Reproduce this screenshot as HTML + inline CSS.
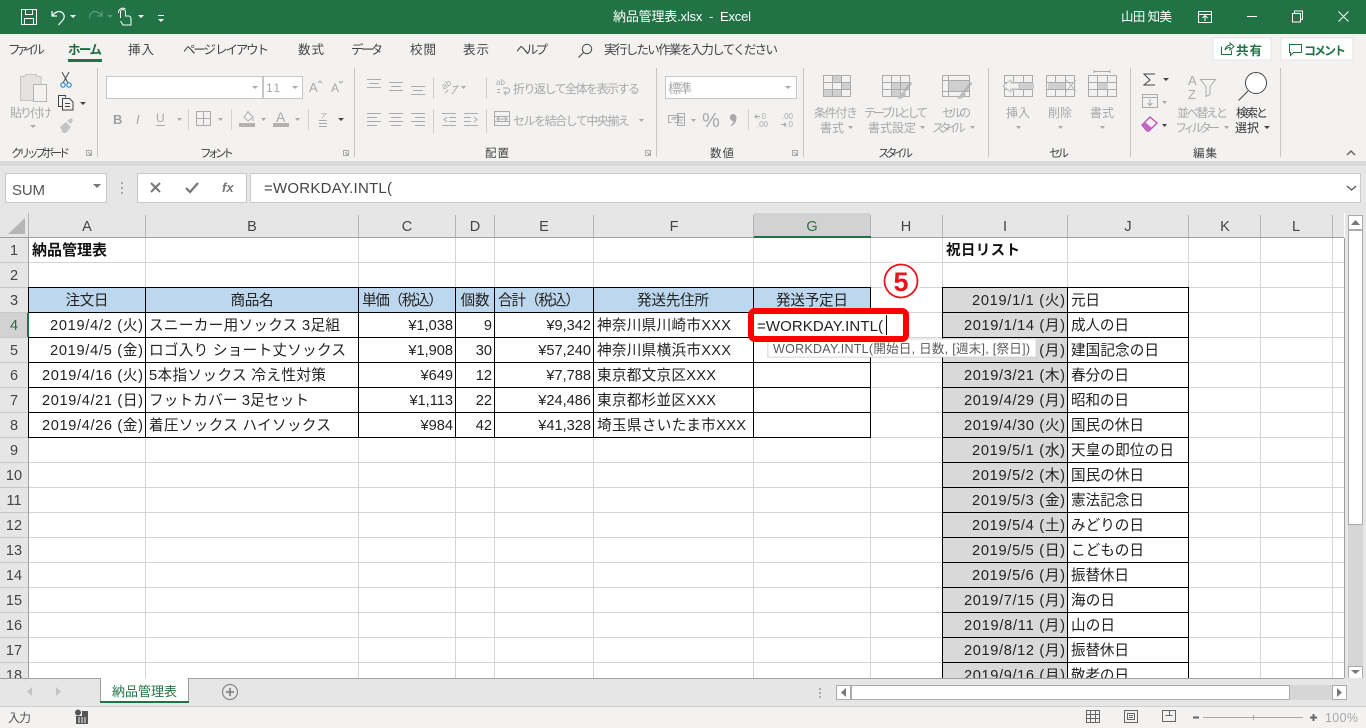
<!DOCTYPE html>
<html lang="ja"><head><meta charset="utf-8"><title>納品管理表.xlsx - Excel</title>
<style>
html,body{margin:0;padding:0;background:#fff;overflow:hidden}
svg{display:block}
text{font-family:"Liberation Sans","Noto Sans CJK JP",sans-serif;white-space:pre}
.c{font-size:14.6px;fill:#222}
.m{text-anchor:middle}
.e{text-anchor:end}
.h{font-size:14.5px;fill:#444;text-anchor:middle}
.t{font-size:12px;fill:#333}
.d{font-size:12px;fill:#a8a8a8}
.g{font-size:11.5px;fill:#444}
.ic{fill:none;stroke:#ababab;stroke-width:1}
.dk{fill:none;stroke:#444;stroke-width:1}
.ar{fill:#aaa}
.ak{fill:#444}
</style></head><body>
<svg width="1366" height="728" viewBox="0 0 1366 728" xmlns="http://www.w3.org/2000/svg">
<rect width="1366" height="728" fill="#fff"/>
<!-- title bar -->
<rect width="1366" height="34" fill="#217346"/>
<g fill="none" stroke="#fff" stroke-width="1">
<path d="M21.500 9.500h15v15h-15zM25.500 9.500v5h7v-5M24.500 24.500v-6h9v6"/>
<path d="M52 11v5h5M52.500 15.500c3-4 7-5 9.500-3 3 2 3 6-.5 9l-3 3.500" stroke-width="1.200"/>
<path d="M102 11v5h-5M101.500 15.500c-3-4-7-5-9.500-3-2 1.500-3 4-2 6" stroke="#5d9a7a" stroke-width="1.200"/>
<path d="M120.500 18v-6a2.500 2.500 0 0 1 5 0v4h3a2.500 2.500 0 0 1 2.500 2.500v6.500h-8l-2.500-4M118.500 13a4.500 4.500 0 0 1 7-4"/>
<path d="M1247 16.500h10M1294.500 13.500v-2.500h8v8.500h-2M1292.500 13.500h8v8.500h-8zM1338.500 11.500l10 10M1348.500 11.500l-10 10"/>
<path d="M1198.500 11.500h13v11h-13zM1198.500 14.500h13M1205 21v-5M1202.500 18l2.500-2.500 2.500 2.500"/>
<path d="M158 15.500h6"/>
</g>
<path d="M70 15h6l-3 3zM138 15h6l-3 3zM158 19h6l-3 3z" fill="#fff"/>
<path d="M107 15h6l-3 3z" fill="#5d9a7a"/>
<text x="613" y="21" font-size="13" fill="#fff" textLength="138">納品管理表.xlsx  -  Excel</text>
<text x="1121" y="21" font-size="12.500" fill="#fff" textLength="51">山田 知美</text>
<!-- ribbon -->
<rect y="34" width="1366" height="127" fill="#f3f2f1"/>
<rect y="161" width="1366" height="5" fill="#d9d9d9"/>
<rect y="166" width="1366" height="47" fill="#e6e6e6"/>
<g font-size="12.500" fill="#444">
<text x="8" y="54" textLength="37">ファイル</text>
<text x="68" y="54" textLength="34" font-weight="bold" fill="#1f6b41">ホーム</text>
<text x="128" y="54" textLength="26">挿入</text>
<text x="183" y="54" textLength="86">ページ レイアウト</text>
<text x="298" y="54" textLength="26">数式</text>
<text x="351" y="54" textLength="32">データ</text>
<text x="410" y="54" textLength="26">校閲</text>
<text x="463" y="54" textLength="26">表示</text>
<text x="516" y="54" textLength="32">ヘルプ</text>
<text x="604" y="54" textLength="174">実行したい作業を入力してください</text>
</g>
<rect x="68" y="59" width="34" height="3" fill="#217346"/>
<circle cx="587" cy="49" r="4.700" class="dk"/>
<path class="dk" d="M583.500 52.500l-5 5"/>
<rect x="1213" y="38" width="58" height="22" fill="#fff" stroke="#e4e4e4"/>
<rect x="1281" y="38" width="72" height="22" fill="#fff" stroke="#e4e4e4"/>
<path d="M1221.500 46.500v8h10v-4M1225 50c.5-3 2.500-4.500 5-4.500V43l4 3.500-4 3.500v-2.500c-2 0-3.500 .5-5 2.500z" fill="none" stroke="#217346"/>
<path d="M1289.500 44.500h12v8h-8l-3 3v-3h-1z" fill="none" stroke="#217346"/>
<text x="1236" y="55" font-size="12.500" font-weight="bold" fill="#217346" textLength="26">共有</text>
<text x="1304" y="55" font-size="12" font-weight="bold" fill="#217346" textLength="42">コメント</text>
<!-- separators -->
<path d="M97.500 68v89M354.500 68v89M656.500 68v89M803.500 68v89M988.500 68v89M1130.500 68v89M1280.500 68v89" stroke="#c6c6c6"/>
<path d="M433.500 77v22M433.500 109v24M486.500 77v22M486.500 109v24M188.500 109v21M231.500 109v21M308.500 109v21M748.500 109v21" stroke="#d0d0d0"/>
<!-- group labels -->
<text class="g" x="11" y="157" textLength="59">クリップボード</text>
<text class="g" x="200" y="157" textLength="34">フォント</text>
<text class="g" x="485" y="157" textLength="24">配置</text>
<text class="g" x="710" y="157" textLength="24">数値</text>
<text class="g" x="878" y="157" textLength="35">スタイル</text>
<text class="g" x="1049" y="157" textLength="20">セル</text>
<text class="g" x="1193" y="157" textLength="24">編集</text>
<path class="ic" d="M86.500 150.500h5v5h-5zM88 152l3 3M91 153v2h-2"/>
<path class="ic" d="M343.500 150.500h5v5h-5zM345 152l3 3M348 153v2h-2"/>
<path class="ic" d="M645.500 150.500h5v5h-5zM647 152l3 3M650 153v2h-2"/>
<path class="ic" d="M792.500 150.500h5v5h-5zM794 152l3 3M797 153v2h-2"/>
<path d="M1347 155l4-4 4 4" fill="none" stroke="#666" stroke-width="1.500"/>
<!-- clipboard group -->
<path d="M20.500 76.500h5v-2h11v2h4.500v24h-20.500z" fill="#e4e3e2" stroke="#c4c4c4"/>
<rect x="33.500" y="84.500" width="13" height="17" fill="#f3f2f1" stroke="#b5b5b5"/>
<text class="d" x="10" y="117" textLength="42">貼り付け</text>
<path class="ar" d="M30 125h6l-3 3z"/>
<path d="M62 72l6 11M69 72l-6 11" stroke="#444" fill="none"/>
<circle cx="63" cy="85" r="2.200" fill="none" stroke="#2b8fd6" stroke-width="1.200"/><circle cx="69" cy="85" r="2.200" fill="none" stroke="#2b8fd6" stroke-width="1.200"/>
<path class="dk" d="M62.500 106.500h-4v-11h7v2M62.500 98.500h7l3.500 3.500v8h-10.500z"/><path class="dk" d="M65 103.500h5M65 106.500h5"/>
<path class="ak" d="M80 102h6l-3 3z"/>
<path d="M60 127l6-5 5 5-5 6h-3zM67 121l4-3 2 2-2 4z" fill="#c4c4c4"/>
<!-- font group -->
<rect x="106.500" y="76.500" width="156" height="22" fill="#fff" stroke="#c6c6c6"/>
<rect x="263.500" y="76.500" width="39" height="22" fill="#fff" stroke="#c6c6c6"/>
<path class="ar" d="M252 86h6l-3 3zM292 86h6l-3 3zM177 118h5l-2.500 3zM218 118h5l-2.500 3zM261 118h5l-2.500 3zM295 118h5l-2.500 3z"/>
<path class="ak" d="M338 118h6l-3 3z"/>
<text x="266" y="92" font-size="12" fill="#a8a8a8" textLength="14">11</text>
<text x="309" y="92" font-size="13" fill="#a8a8a8">A</text><text x="331" y="92" font-size="12" fill="#a8a8a8">A</text>
<path class="ic" d="M318 83l2-2 2 2M339 81l2 2 2-2"/>
<text x="113" y="124" font-size="13" font-weight="bold" fill="#a0a0a0">B</text>
<text x="136" y="124" font-size="13" font-style="italic" fill="#a8a8a8" font-family="Liberation Serif">I</text>
<text x="156" y="122" font-size="12" fill="#a8a8a8">U</text>
<path class="ic" d="M156 125.500h9M196.500 111.500h14v14h-14zM203.500 111.500v14M196.500 118.500h14"/>
<path class="ic" d="M244 117l4-5 5 5-5 4zM248 112v-1M253 118v3"/>
<rect x="239" y="123" width="16" height="4" fill="#b5b1ac"/>
<text x="276" y="122" font-size="14" fill="#a8a8a8">A</text>
<rect x="273" y="123" width="16" height="4" fill="#b5b1ac"/>
<text x="320" y="118" font-size="7" fill="#a8a8a8">ア</text>
<path class="ic" d="M319 120.500h8M319 123.500h8M319 126.500h8"/>
<!-- align -->
<path class="ic" d="M367 79.500h14M369 83.500h10M367 87.500h14M389 82.500h14M391 86.500h10M389 90.500h14M411 86.500h14M413 90.500h10M411 94.500h14"/>
<path class="ic" d="M367 113.500h14M367 117.500h10M367 121.500h14M367 125.500h10M389 113.500h14M391 117.500h10M389 121.500h14M391 125.500h10M411 113.500h14M415 117.500h10M411 121.500h14M415 125.500h10"/>
<path class="ic" d="M445 93l3-3M452 94l6-8-5 1"/>
<text x="442" y="88" font-size="9" fill="#aaa" transform="rotate(-35 446 86)">ab</text>
<path class="ar" d="M461 86h5l-2.500 3z"/>
<path class="ic" d="M442 113.500h14M449 117.500h7M449 121.500h7M442 125.500h14M447 117l-3 2.500 3 2.500M464 113.500h14M464 117.500h7M464 121.500h7M464 125.500h14M474 117l3 2.500-3 2.500"/>
<text x="496" y="85" font-size="8" fill="#aaa">ab</text>
<path class="ic" d="M497 89.500h3M497 92.500h3M503 88h5c2 0 2 5 0 5h-3M506 91l-2 2 2 2"/>
<text class="d" x="513" y="93" textLength="127">折り返して全体を表示する</text>
<path class="ic" d="M494.500 111.500h15v14h-15zM494.500 116.500h15M494.500 121.500h15M497 119h10M499 117l-2 2 2 2M505 117l2 2-2 2"/>
<text class="d" x="513" y="125" textLength="117">セルを結合して中央揃え</text>
<path class="ar" d="M639 119h5l-2.500 3z"/>
<!-- number -->
<rect x="665.500" y="76.500" width="131" height="22" fill="#fff" stroke="#c6c6c6"/>
<text class="d" x="668" y="93" font-size="13" style="font-size:13px" textLength="24">標準</text>
<path class="ar" d="M785 86h6l-3 3zM691 119h5l-2.500 3z"/>
<path class="ic" d="M668.500 115.500h10v7h-4M668.500 115.500v7h3M672.500 117.500h12v-2M677.500 113.500h7v12h-7zM671 119h5M679 117h4M679 120h4M679 123h4"/>
<text x="702" y="127" font-size="20" fill="#a8a8a8" textLength="16">%</text>
<path d="M733 114a3.500 3.500 0 0 1 3.500 3.500c0 4-1.500 6.500-5 8.500l-.8-1c1.800-1.200 2.800-2.600 3-4a3.400 3.400 0 0 1-.7-7z" fill="#a8a8a8"/>
<text x="758" y="119" font-size="8" fill="#aaa" textLength="8">.0</text><text x="757" y="127" font-size="8" fill="#aaa" textLength="11">.00</text>
<text x="782" y="119" font-size="8" fill="#aaa" textLength="11">.00</text><text x="785" y="127" font-size="8" fill="#aaa" textLength="8">.0</text>
<path class="ic" d="M760 116.500h-5l2-2M755 116.500l2 2M781 124.500h5l-2-2M786 124.500l-2 2"/>
<!-- style -->
<path d="M833 76h8v6h-8zM824 90h18v6h-18z" fill="#cfcfcf"/>
<path d="M841 83h9v6h-9z" fill="#cfcfcf"/>
<path d="M892 83h17v6h-17zM892 90h8v6h-8z" fill="#cfcfcf"/>
<path d="M949 81h20v10h-20z" fill="#cfcfcf"/>
<g class="ic">
<path d="M823.500 75.500h27v21h-27zM823.500 82.500h27M823.500 89.500h27M832.500 75.500v21M841.500 75.500v21"/>
<path d="M882.500 75.500h27v21h-27zM882.500 82.500h27M882.500 89.500h27M891.500 75.500v21M900.500 75.500v21"/>
<path d="M942.500 75.500h27v21h-27zM942.500 80.500h27M942.500 91.500h27M948.500 75.500v21"/>
</g>
<path d="M911 82l-8 10M912 83l-8 10" stroke="#aaa" fill="none"/><path d="M897 99c2-1 3-6 6-7l3 2c-1 3-4 5-9 5z" fill="#bdbdbd"/>
<path d="M971 82l-8 10M972 83l-8 10" stroke="#aaa" fill="none"/><path d="M957 99c2-1 3-6 6-7l3 2c-1 3-4 5-9 5z" fill="#bdbdbd"/>
<text class="d" x="814" y="117" textLength="44">条件付き</text>
<text class="d" x="820" y="132" textLength="24">書式</text>
<text class="d" x="864" y="117" textLength="64">テーブルとして</text>
<text class="d" x="868" y="132" textLength="48">書式設定</text>
<text class="d" x="942" y="117" textLength="29">セルの</text>
<text class="d" x="932" y="132" textLength="34">スタイル</text>
<path class="ar" d="M848 126h5l-2.500 3zM920 126h5l-2.500 3zM970 126h5l-2.500 3z"/>
<!-- cells -->
<g class="ic">
<path d="M1004.500 75.500h28v21h-28zM1004.500 82.500h28M1004.500 89.500h28M1013.500 75.500v21M1023.500 75.500v21"/>
<path d="M1046.500 75.500h28v21h-28zM1046.500 82.500h28M1046.500 89.500h28M1055.500 75.500v21M1065.500 75.500v21"/>
<path d="M1088.500 75.500h28v21h-28zM1088.500 82.500h28M1088.500 89.500h28M1097.500 75.500v21M1107.500 75.500v21M1094 71.500h16M1094 70v3M1110 70v3"/>
</g>
<rect x="1014" y="83" width="20" height="6" fill="#cfcfcf"/>
<path d="M1011 80l-8 6 8 6v-3h8v-6h-8z" fill="#f3f2f1" stroke="#c0c0c0"/>
<rect x="1048" y="83" width="17" height="6" fill="#cfcfcf"/>
<path d="M1066 80l10 11M1076 80l-10 11" stroke="#bbb" fill="none"/>
<rect x="1098" y="83" width="10" height="6" fill="#cfcfcf"/>
<text class="d" x="1006" y="117" textLength="24">挿入</text>
<text class="d" x="1048" y="117" textLength="24">削除</text>
<text class="d" x="1090" y="117" textLength="24">書式</text>
<path class="ar" d="M1016 126h5l-2.500 3zM1058 126h5l-2.500 3zM1100 126h5l-2.500 3z"/>
<!-- edit -->
<path d="M1155 74h-11l6 6-6 5h11" fill="none" stroke="#444"/>
<path class="ak" d="M1163 78h6l-3 3zM1162 124h5l-2.500 3zM1264 126h6l-3 3z"/>
<path class="ar" d="M1162 101h5l-2.500 3zM1224 126h5l-2.500 3z"/>
<path class="ic" d="M1142.500 94.500h15v13h-15zM1142.500 97.500h15M1150 99v6M1147.500 103l2.500 2.500 2.500-2.500"/>
<path d="M1142 125l8-8 7 6-8 8h-2z" fill="#f6f0f6" stroke="#b44cb4" stroke-width="1.300"/>
<path d="M1142 125l3-3 7 6-3 3h-2z" fill="#c266c2"/>
<text x="1188" y="85" font-size="13" fill="#aaa">A</text><text x="1188" y="99" font-size="13" fill="#aaa">Z</text>
<path class="ic" d="M1200.500 79.500h15l-5.500 7v8l-4 2v-10z"/>
<text class="d" x="1177" y="117" textLength="51">並べ替えと</text>
<text class="d" x="1175" y="132" textLength="45">フィルター</text>
<circle cx="1256" cy="83" r="10.500" fill="#fff" stroke="#444"/><path d="M1248 91l-9.500 9.500" stroke="#444" fill="none"/>
<text class="t" x="1236" y="117" textLength="32">検索と</text>
<text class="t" x="1235" y="132" textLength="24">選択</text>
<!-- formula bar -->
<rect x="5.500" y="173.500" width="101" height="29" fill="#fff" stroke="#c9c9c9"/>
<text x="12" y="195" font-size="15" fill="#555" textLength="33">SUM</text>
<path d="M93 184h8l-4 4z" fill="#777"/>
<path d="M122 182v2M122 187v2M122 192v2" stroke="#999" stroke-width="1.500"/>
<rect x="137.500" y="173.500" width="109" height="29" fill="#fff" stroke="#c9c9c9"/>
<rect x="250.500" y="173.500" width="1110" height="29" fill="#fff" stroke="#c9c9c9"/>
<path d="M151 183l9 9M160 183l-9 9" stroke="#777" stroke-width="2" fill="none"/>
<path d="M186 188l4 4 8-9" stroke="#777" stroke-width="2.200" fill="none"/>
<text x="222" y="192" font-size="13" font-style="italic" font-weight="bold" fill="#777" font-family="Liberation Serif">fx</text>
<text x="264" y="193" font-size="15" fill="#444" textLength="128">=WORKDAY.INTL(</text>
<path d="M1347 186l4.500 4 4.500-4" stroke="#555" stroke-width="1.300" fill="none"/>
<!-- column headers -->
<rect x="0" y="213" width="1344" height="25" fill="#e6e6e6"/>
<rect x="754" y="213" width="116" height="24" fill="#d2d2d2"/>
<path d="M8 234h17v-16z" fill="#b5b5b5"/>
<path d="M28.500 213v25M145.500 215v22M358.500 215v22M455.500 215v22M494.500 215v22M593.500 215v22M753.500 215v22M870.500 215v22M942.500 215v22M1067.500 215v22M1188.500 215v22M1260.500 215v22M1332.500 215v22" stroke="#b4b4b4"/>
<path d="M0 237.500h1344" stroke="#9f9f9f"/>
<rect x="754" y="236" width="117" height="2" fill="#217346"/>
<text class="h" x="87" y="231">A</text><text class="h" x="252" y="231">B</text><text class="h" x="407" y="231">C</text><text class="h" x="475" y="231">D</text><text class="h" x="544" y="231">E</text><text class="h" x="674" y="231">F</text><text class="h" x="812" y="231" style="fill:#2c6e49">G</text><text class="h" x="906" y="231">H</text><text class="h" x="1005" y="231">I</text><text class="h" x="1128" y="231">J</text><text class="h" x="1225" y="231">K</text><text class="h" x="1296" y="231">L</text>
<!-- row headers -->
<rect x="0" y="238" width="28" height="440" fill="#e6e6e6"/>
<rect x="0" y="313" width="28" height="24" fill="#d2d2d2"/>
<path d="M0 262.500h28M0 287.500h28M0 312.500h28M0 337.500h28M0 362.500h28M0 387.500h28M0 412.500h28M0 437.500h28M0 462.500h28M0 487.500h28M0 512.500h28M0 537.500h28M0 562.500h28M0 587.500h28M0 612.500h28M0 637.500h28M0 662.500h28" stroke="#c8c8c8"/>
<path d="M28.500 238v440" stroke="#9f9f9f"/>
<rect x="27" y="313" width="2" height="24" fill="#217346"/>
<text class="h" x="14" y="255">1</text><text class="h" x="14" y="280">2</text><text class="h" x="14" y="305">3</text><text class="h" x="14" y="330" style="fill:#2c6e49">4</text><text class="h" x="14" y="355">5</text><text class="h" x="14" y="380">6</text><text class="h" x="14" y="405">7</text><text class="h" x="14" y="430">8</text><text class="h" x="14" y="455">9</text><text class="h" x="14" y="480">10</text><text class="h" x="14" y="505">11</text><text class="h" x="14" y="530">12</text><text class="h" x="14" y="555">13</text><text class="h" x="14" y="580">14</text><text class="h" x="14" y="605">15</text><text class="h" x="14" y="630">16</text><text class="h" x="14" y="655">17</text><text class="h" x="14" y="680">18</text>
<!-- gridlines -->
<path d="M29 262.500h1315M29 287.500h1315M29 312.500h1315M29 337.500h1315M29 362.500h1315M29 387.500h1315M29 412.500h1315M29 437.500h1315M29 462.500h1315M29 487.500h1315M29 512.500h1315M29 537.500h1315M29 562.500h1315M29 587.500h1315M29 612.500h1315M29 637.500h1315M29 662.500h1315" stroke="#d4d4d4"/>
<path d="M145.500 238v440M358.500 238v440M455.500 238v440M494.500 238v440M593.500 238v440M753.500 238v440M870.500 238v440M942.500 238v440M1067.500 238v440M1188.500 238v440M1260.500 238v440M1332.500 238v440" stroke="#d4d4d4"/>
<path d="M1344.500 238v440" stroke="#9f9f9f"/>
<!-- table 1 -->
<rect x="29" y="288" width="841" height="24" fill="#bdd7ee"/>
<path d="M29 287.500h841.500M29 312.500h841.500M29 337.500h841.500M29 362.500h841.500M29 387.500h841.500M29 412.500h841.500M29 437.500h841.500M145.500 287v151M358.500 287v151M455.500 287v151M494.500 287v151M593.500 287v151M753.500 287v151M870.500 287v151M28.500 337v101M28.500 287v26" stroke="#000"/>
<!-- table 2 -->
<rect x="943" y="288" width="124" height="390" fill="#d9d9d9"/>
<path d="M942.500 287v391M1067.500 287v391M1188.500 287v391M942 287.500h247M942 312.500h247M942 337.500h247M942 362.500h247M942 387.500h247M942 412.500h247M942 437.500h247M942 462.500h247M942 487.500h247M942 512.500h247M942 537.500h247M942 562.500h247M942 587.500h247M942 612.500h247M942 637.500h247M942 662.500h247" stroke="#000"/>
<!-- cell text -->
<text x="32" y="255" font-size="15" font-weight="bold" fill="#111" textLength="75">納品管理表</text>
<text x="946" y="255" font-size="14.500" font-weight="bold" fill="#111" textLength="74">祝日リスト</text>
<text class="c m" x="87" y="305" textLength="43">注文日</text>
<text class="c m" x="252" y="305" textLength="43">商品名</text>
<text class="c" x="362" y="305" textLength="81">単価（税込）</text>
<text class="c m" x="475" y="305" textLength="29">個数</text>
<text class="c" x="498" y="305" textLength="82">合計（税込）</text>
<text class="c m" x="673" y="305" textLength="72">発送先住所</text>
<text class="c m" x="812" y="305" textLength="72">発送予定日</text>

<text class="c" x="50" y="330" textLength="93">2019/4/2 (火)</text>
<text class="c" x="50" y="355" textLength="93">2019/4/5 (金)</text>
<text class="c" x="42" y="380" textLength="101">2019/4/16 (火)</text>
<text class="c" x="42" y="405" textLength="101">2019/4/21 (日)</text>
<text class="c" x="42" y="430" textLength="101">2019/4/26 (金)</text>

<text class="c" x="149" y="330" textLength="191">スニーカー用ソックス 3足組</text>
<text class="c" x="149" y="355" textLength="197">ロゴ入り ショート丈ソックス</text>
<text class="c" x="149" y="380" textLength="177">5本指ソックス 冷え性対策</text>
<text class="c" x="149" y="405" textLength="160">フットカバー 3足セット</text>
<text class="c" x="149" y="430" textLength="182">着圧ソックス ハイソックス</text>

<text class="c e" x="453" y="330">¥1,038</text><text class="c e" x="453" y="355">¥1,908</text><text class="c e" x="453" y="380">¥649</text><text class="c e" x="453" y="405">¥1,113</text><text class="c e" x="453" y="430">¥984</text>
<text class="c e" x="492" y="330">9</text><text class="c e" x="492" y="355">30</text><text class="c e" x="492" y="380">12</text><text class="c e" x="492" y="405">22</text><text class="c e" x="492" y="430">42</text>
<text class="c e" x="591" y="330">¥9,342</text><text class="c e" x="591" y="355">¥57,240</text><text class="c e" x="591" y="380">¥7,788</text><text class="c e" x="591" y="405">¥24,486</text><text class="c e" x="591" y="430">¥41,328</text>

<text class="c" x="597" y="330" textLength="134">神奈川県川崎市XXX</text>
<text class="c" x="597" y="355" textLength="134">神奈川県横浜市XXX</text>
<text class="c" x="597" y="380" textLength="119">東京都文京区XXX</text>
<text class="c" x="597" y="405" textLength="119">東京都杉並区XXX</text>
<text class="c" x="597" y="430" textLength="149">埼玉県さいたま市XXX</text>

<text class="c" x="972" y="305" textLength="93">2019/1/1 (火)</text>
<text class="c" x="964" y="330" textLength="101">2019/1/14 (月)</text>
<text class="c" x="964" y="355" textLength="101">2019/2/11 (月)</text>
<text class="c" x="964" y="380" textLength="101">2019/3/21 (木)</text>
<text class="c" x="964" y="405" textLength="101">2019/4/29 (月)</text>
<text class="c" x="964" y="430" textLength="101">2019/4/30 (火)</text>
<text class="c" x="972" y="455" textLength="93">2019/5/1 (水)</text>
<text class="c" x="972" y="480" textLength="93">2019/5/2 (木)</text>
<text class="c" x="972" y="505" textLength="93">2019/5/3 (金)</text>
<text class="c" x="972" y="530" textLength="93">2019/5/4 (土)</text>
<text class="c" x="972" y="555" textLength="93">2019/5/5 (日)</text>
<text class="c" x="972" y="580" textLength="93">2019/5/6 (月)</text>
<text class="c" x="964" y="605" textLength="101">2019/7/15 (月)</text>
<text class="c" x="964" y="630" textLength="101">2019/8/11 (月)</text>
<text class="c" x="964" y="655" textLength="101">2019/8/12 (月)</text>
<text class="c" x="964" y="680" textLength="101">2019/9/16 (月)</text>

<text class="c" x="1071" y="305" textLength="29">元日</text>
<text class="c" x="1071" y="330" textLength="58">成人の日</text>
<text class="c" x="1071" y="355" textLength="88">建国記念の日</text>
<text class="c" x="1071" y="380" textLength="58">春分の日</text>
<text class="c" x="1071" y="405" textLength="58">昭和の日</text>
<text class="c" x="1071" y="430" textLength="73">国民の休日</text>
<text class="c" x="1071" y="455" textLength="103">天皇の即位の日</text>
<text class="c" x="1071" y="480" textLength="73">国民の休日</text>
<text class="c" x="1071" y="505" textLength="73">憲法記念日</text>
<text class="c" x="1071" y="530" textLength="73">みどりの日</text>
<text class="c" x="1071" y="555" textLength="73">こどもの日</text>
<text class="c" x="1071" y="580" textLength="58">振替休日</text>
<text class="c" x="1071" y="605" textLength="44">海の日</text>
<text class="c" x="1071" y="630" textLength="44">山の日</text>
<text class="c" x="1071" y="655" textLength="58">振替休日</text>
<text class="c" x="1071" y="680" textLength="58">敬老の日</text>
<!-- tooltip -->
<rect x="767" y="340" width="270" height="18" fill="#000" opacity=".08"/>
<rect x="768" y="339" width="268" height="18" fill="#fff" stroke="#dedede"/>
<text x="773" y="353" font-size="12.500" fill="#5a5a5a" textLength="257">WORKDAY.INTL(開始日, 日数, [週末], [祭日])</text>
<!-- edit cell -->
<rect x="755" y="314" width="147" height="22" fill="#fff"/>
<rect x="751" y="311" width="155" height="28" rx="4" fill="none" stroke="#fe0000" stroke-width="6"/>
<text x="757" y="331" font-size="15" fill="#222" textLength="126">=WORKDAY.INTL(</text>
<path d="M886.500 315v20" stroke="#000"/>
<!-- step badge -->
<circle cx="901" cy="281" r="20" fill="#fff" opacity=".85"/>
<circle cx="901" cy="281" r="16.500" fill="#fff" stroke="#e9141d" stroke-width="1.800"/>
<text x="901" y="291" font-size="27" font-weight="bold" fill="#e9141d" text-anchor="middle">5</text>
<!-- vertical scrollbar -->
<rect x="1345" y="213" width="21" height="465" fill="#e6e6e6"/>
<rect x="1348.500" y="215.500" width="14" height="14" fill="#fff" stroke="#ababab"/>
<path d="M1351 225h9l-4.500-5z" fill="#777"/>
<rect x="1348" y="230" width="15" height="436" fill="#d6d6d6"/>
<rect x="1348.500" y="230.500" width="14" height="294" fill="#fff" stroke="#ababab"/>
<rect x="1348.500" y="666.500" width="14" height="12" fill="#fff" stroke="#ababab"/>
<path d="M1351 670h9l-4.500 4z" fill="#777"/>
<!-- sheet tabs bar -->
<rect y="678" width="1366" height="28" fill="#e6e6e6"/>
<path d="M0 678.500h1344" stroke="#9f9f9f"/>
<rect x="100" y="678" width="89" height="24" fill="#fff"/>
<path d="M100.500 678v24M188.500 678v24" stroke="#9f9f9f"/>
<rect x="100" y="701" width="89" height="2" fill="#217346"/>
<text x="112" y="696" font-size="13" fill="#217346" textLength="65">納品管理表</text>
<path d="M32 687l-5 4.500 5 4.500zM56 687l5 4.500-5 4.500z" fill="#c4c4c4"/>
<circle cx="230" cy="692" r="7.500" fill="none" stroke="#8a8a8a" stroke-width="1.200"/>
<path d="M226 692h8M230 688v8" stroke="#777" stroke-width="1.500"/>
<path d="M820 688v2M820 692v2M820 696v2" stroke="#999" stroke-width="1.500"/>
<rect x="836.500" y="685.500" width="14" height="14" fill="#fff" stroke="#ababab"/>
<path d="M846 688l-5 4.500 5 4.500z" fill="#777"/>
<rect x="851" y="685" width="481" height="15" fill="#d6d6d6"/>
<rect x="851.500" y="685.500" width="438" height="14" fill="#fff" stroke="#ababab"/>
<rect x="1332.500" y="685.500" width="14" height="14" fill="#fff" stroke="#ababab"/>
<path d="M1337 688l5 4.500-5 4.500z" fill="#777"/>
<!-- status bar -->
<rect y="706" width="1366" height="22" fill="#f3f2f1"/>
<path d="M0 706.500h1366" stroke="#d0d0d0"/>
<text x="8" y="722" font-size="12" fill="#555" textLength="23">入力</text>
<circle cx="78" cy="712.500" r="3" fill="#555"/>
<path d="M82 711h6v13h-12v-8h6z" fill="#555"/>
<path d="M78 718h8M78 720h8M78 722h8" stroke="#f3f2f1" stroke-dasharray="2 1"/>
<path d="M1086.500 710.500h13v12h-13zM1086.500 714.500h13M1086.500 718.500h13M1090.500 710.500v12M1095.500 710.500v12M1124.500 710.500h13v12h-13zM1127.500 713.500h7v6h-7zM1129 715.500h4M1129 717.500h4M1162.500 710.500h13v11h-13zM1169.500 710.500v5M1165.500 715.500h7" fill="none" stroke="#666"/>
<path d="M1193 717.500h6M1310 717.500h7M1313.500 714v7" stroke="#666" stroke-width="2"/>
<path d="M1203 717.500h100M1253.500 715v5" stroke="#aaa"/>
<text x="1325" y="722" font-size="12.500" fill="#a8a8a8" textLength="33">100%</text>
</svg>
</body></html>
